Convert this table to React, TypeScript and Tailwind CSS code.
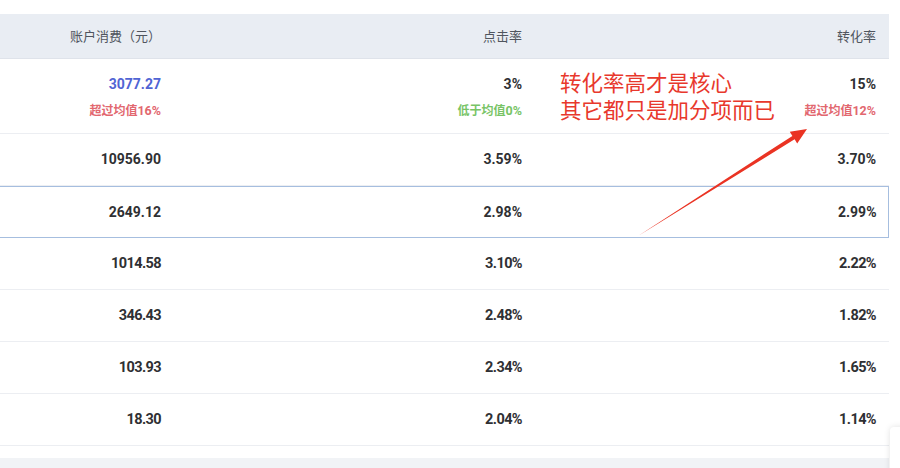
import React from "react";

type Row = {
  cost: string;
  ctr: string;
  cvr: string;
  first?: boolean;
  active?: boolean;
  narrow?: boolean;
};

const rows: Row[] = [
  { cost: "3077.27", ctr: "3%", cvr: "15%", first: true },
  { cost: "10956.90", ctr: "3.59%", cvr: "3.70%" },
  { cost: "2649.12", ctr: "2.98%", cvr: "2.99%", active: true },
  { cost: "1014.58", ctr: "3.10%", cvr: "2.22%", narrow: true },
  { cost: "346.43", ctr: "2.48%", cvr: "1.82%", narrow: true },
  { cost: "103.93", ctr: "2.34%", cvr: "1.65%", narrow: true },
  { cost: "18.30", ctr: "2.04%", cvr: "1.14%", narrow: true },
];

const cjk = "font-['Noto_Sans_CJK_SC',sans-serif]";
const num = "font-['Roboto','Noto_Sans_CJK_SC',sans-serif]";

const Hint = ({ label, value, tone }: { label: string; value: string; tone: "up" | "down" }) => (
  <div
    className={`text-[12px] leading-[16px] mt-[7px] ${cjk} ${tone === "up" ? "text-[#e2676f]" : "text-[#78c466]"}`}
  >
    {label}
    <span className={`${num} font-bold text-[12.5px]`}>{value}</span>
  </div>
);

const App = () => {
  return (
    <div className="w-[900px] h-[468px] bg-white overflow-hidden relative">
      <div className="w-[889px] pt-[14px]">
        {/* header */}
        <div className={`flex h-[45px] bg-[#e9edf3] border-b border-[#dfe3ea] text-[13px] text-[#50555e] ${cjk}`}>
          <div className="w-[174px] flex items-center justify-end pr-[13px]">账户消费（元）</div>
          <div className="w-[361px] flex items-center justify-end pr-[13px]">点击率</div>
          <div className="flex-1 flex items-center justify-end pr-[13px]">转化率</div>
        </div>

        {/* rows */}
        {rows.map((r) => (
          <div
            key={r.cost}
            className={`flex text-[#2f3033] font-bold ${num} ${
              r.narrow ? "text-[14.5px] tracking-[-0.6px]" : "text-[14px]"
            } ${r.first ? "h-[75px]" : "h-[52px]"} ${
              r.active ? "border-[1.5px] border-l-0 border-[#a6bedf]" : "border-b border-[#eceef2]"
            }`}
          >
            <div className="w-[174px] flex flex-col items-end justify-center pr-[13px]">
              <span className={r.first ? "text-[#5064d4]" : ""}>{r.cost}</span>
              {r.first && <Hint label="超过均值" value="16%" tone="up" />}
            </div>
            <div className="w-[361px] flex flex-col items-end justify-center pr-[13px]">
              <span>{r.ctr}</span>
              {r.first && <Hint label="低于均值" value="0%" tone="down" />}
            </div>
            <div className={`flex-1 flex flex-col items-end justify-center ${r.active ? "pr-[11.5px]" : "pr-[13px]"}`}>
              <span>{r.cvr}</span>
              {r.first && <Hint label="超过均值" value="12%" tone="up" />}
            </div>
          </div>
        ))}

        <div className="h-[12px]" />
        <div className="h-[12px] bg-[#f1f3f6]" />
      </div>

      {/* annotation */}
      <div
        className={`absolute left-[560px] top-[68px] text-[21.5px] leading-[27px] text-[#e8382c] ${cjk}`}
      >
        <div>转化率高才是核心</div>
        <div>其它都只是加分项而已</div>
      </div>

      <svg className="absolute left-0 top-0 pointer-events-none" width="900" height="468">
        <polygon
          points="638,236 794.6,139.3 797.2,143.5 807,129 789.8,131.7 792.4,135.9"
          fill="#ea3323"
        />
      </svg>

      {/* edge of a floating card at the bottom right */}
      <div className="absolute left-[890px] top-[427px] w-[30px] h-[60px] bg-white rounded-tl-[4px] shadow-[0_0_6px_rgba(0,0,0,0.12)]" />
    </div>
  );
};

export default App;
